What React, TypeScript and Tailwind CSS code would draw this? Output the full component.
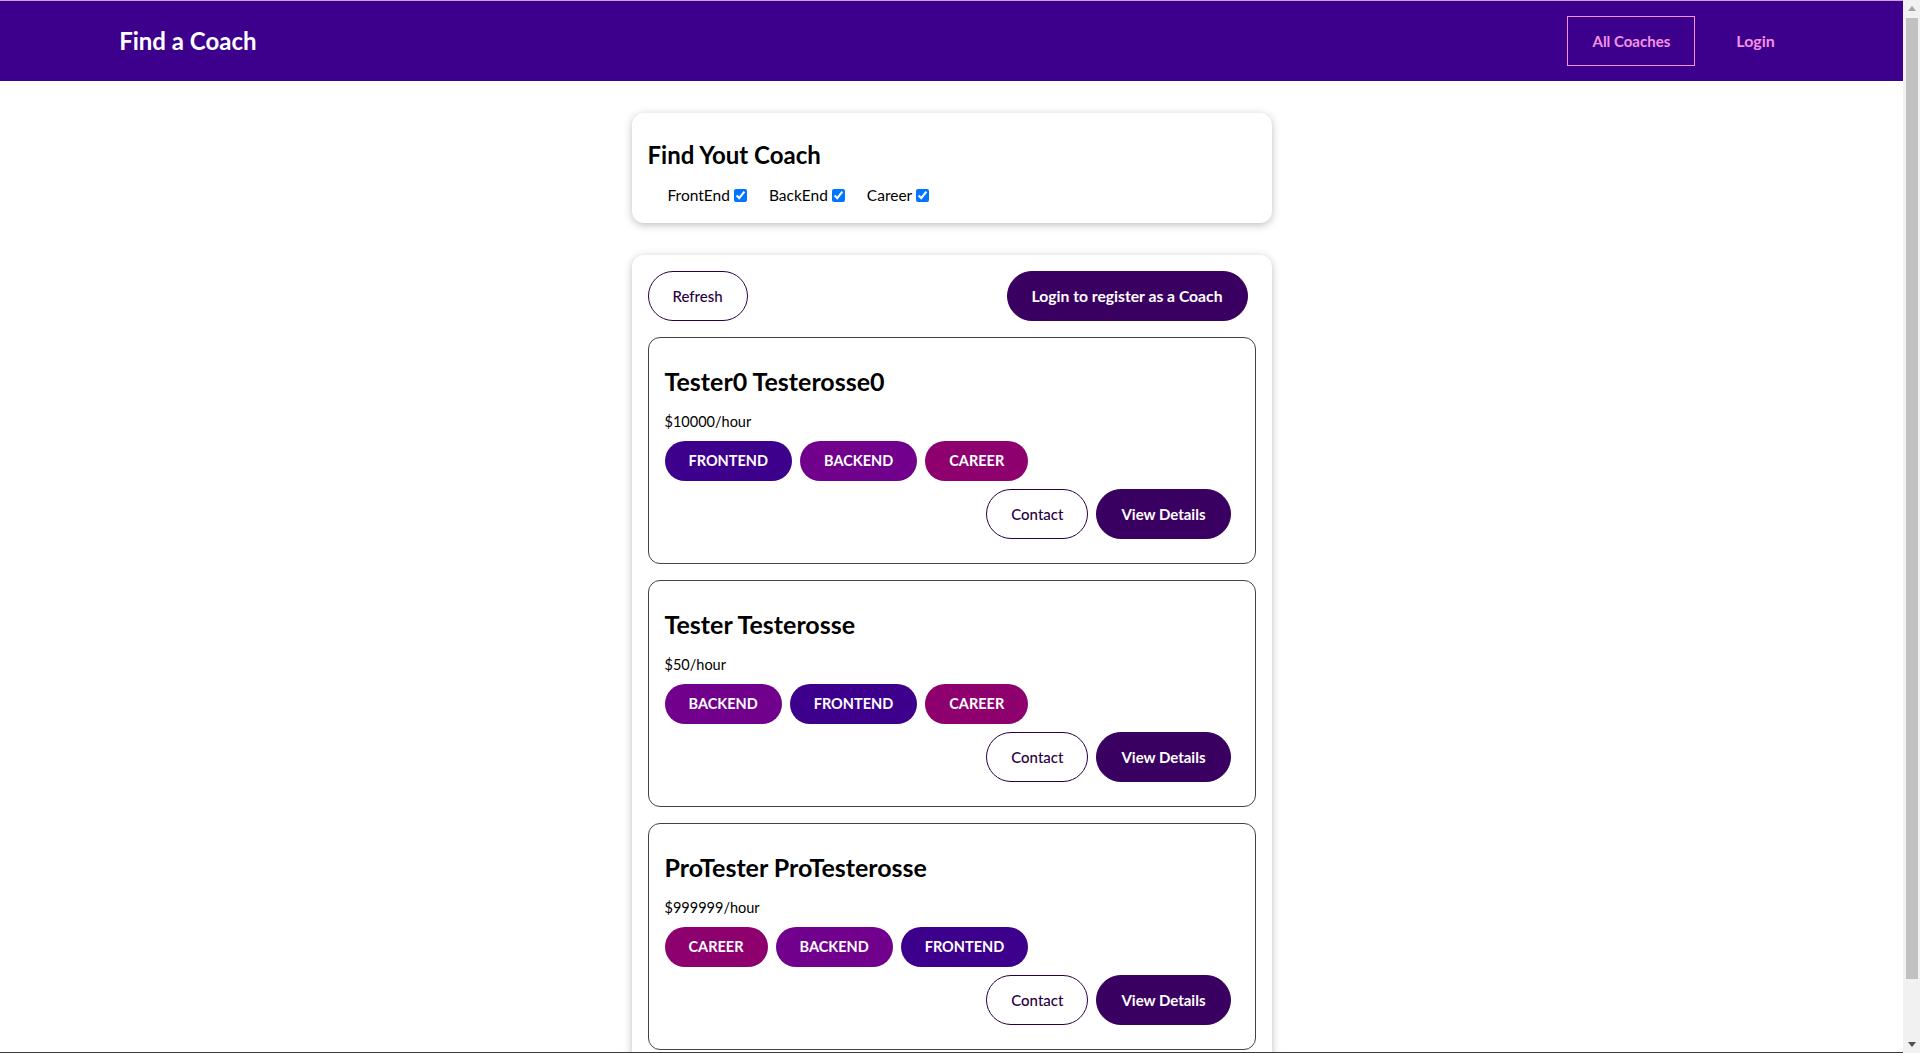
import { useState } from "react";

type Area = "frontend" | "backend" | "career";

interface Coach {
  id: string;
  firstName: string;
  lastName: string;
  rate: number;
  areas: Area[];
}

const coaches: Coach[] = [
  { id: "c0", firstName: "Tester0", lastName: "Testerosse0", rate: 10000, areas: ["frontend", "backend", "career"] },
  { id: "c1", firstName: "Tester", lastName: "Testerosse", rate: 50, areas: ["backend", "frontend", "career"] },
  { id: "c2", firstName: "ProTester", lastName: "ProTesterosse", rate: 999999, areas: ["career", "backend", "frontend"] },
];

const badgeColors: Record<Area, string> = {
  frontend: "bg-[#3d008d]",
  backend: "bg-[#71008d]",
  career: "bg-[#8d006e]",
};

const Badge = ({ type }: { type: Area }) => {
  return (
    <span className={`${badgeColors[type]} text-white rounded-[30px] px-6 py-2 leading-[24px] text-[14.5px] font-bold uppercase`}>
      {type}
    </span>
  );
};

const CoachItem = ({ coach }: { coach: Coach }) => {
  return (
    <li className="border border-[#424242] rounded-xl p-4">
      <h3 className="mt-[11px] text-[25px] leading-[32px] font-bold text-black">
        {coach.firstName} {coach.lastName}
      </h3>
      <h4 className="mt-[13px] text-[14.5px] leading-[24px] text-black">${coach.rate}/hour</h4>
      <div className="mt-[7px] flex gap-2">
        {coach.areas.map((area) => (
          <Badge key={area} type={area} />
        ))}
      </div>
      <div className="mt-2 mb-2 flex justify-end gap-2 pr-2">
        <button className="rounded-[30px] border border-[#270041] px-6 py-3 leading-[24px] text-[15px] font-medium text-[#270041]">
          Contact
        </button>
        <button className="rounded-[30px] border border-[#3a0061] bg-[#3a0061] px-6 py-3 leading-[24px] text-[15px] font-bold text-white">
          View Details
        </button>
      </div>
    </li>
  );
};

export default function App() {
  const [filters, setFilters] = useState({ frontend: true, backend: true, career: true });

  const toggle = (key: Area) => {
    setFilters({ ...filters, [key]: !filters[key] });
  };

  const visible = coaches.filter((c) => c.areas.some((a) => filters[a]));

  return (
    <div className="flex h-[1053px] w-full overflow-hidden bg-white font-['Lato',sans-serif]">
      <div className="flex flex-1 flex-col overflow-hidden">
        <div className="h-px bg-[#c9a2e2]" />
        <header className="flex h-20 w-full items-center bg-[#3d008d]">
          <nav className="mx-auto flex w-[90%] items-center justify-between">
            <h1>
              <a href="#" className="inline-block px-6 py-3 text-[24px] font-bold text-white">
                Find a Coach
              </a>
            </h1>
            <ul className="flex">
              <li className="mx-2">
                <a href="#" className="inline-block border border-[#f391e3] px-6 py-3 leading-[24px] text-[15px] font-bold text-[#f391e3]">
                  All Coaches
                </a>
              </li>
              <li className="mx-2">
                <a href="#" className="inline-block border border-transparent px-6 py-3 leading-[24px] text-[16px] font-bold text-[#f391e3]">
                  Login
                </a>
              </li>
            </ul>
          </nav>
        </header>

        <main className="flex-1 overflow-hidden">
          <section className="mx-auto mt-8 max-w-[40rem] rounded-xl bg-white p-4 shadow-[0_2px_8px_rgba(0,0,0,0.26)]">
            <h2 className="mt-[12px] text-[24px] leading-[28px] font-bold text-black">Find Yout Coach</h2>
            <div className="mt-[14px] flex items-center pl-[20px] text-[15.5px] leading-[24px] text-black">
              <span className="mr-[19px] flex items-center">
                <label htmlFor="frontend">FrontEnd</label>
                <input id="frontend" type="checkbox" checked={filters.frontend} onChange={() => toggle("frontend")} className="ml-[4px] mr-[3px] h-[13px] w-[13px]" />
              </span>
              <span className="mr-[19px] flex items-center">
                <label htmlFor="backend">BackEnd</label>
                <input id="backend" type="checkbox" checked={filters.backend} onChange={() => toggle("backend")} className="ml-[4px] mr-[3px] h-[13px] w-[13px]" />
              </span>
              <span className="flex items-center">
                <label htmlFor="career">Career</label>
                <input id="career" type="checkbox" checked={filters.career} onChange={() => toggle("career")} className="ml-[4px] mr-[3px] h-[13px] w-[13px]" />
              </span>
            </div>
          </section>

          <section className="mx-auto mt-8 max-w-[40rem] rounded-xl bg-white p-4 shadow-[0_2px_8px_rgba(0,0,0,0.26)]">
            <div className="flex justify-between">
              <button className="rounded-[30px] border border-[#270041] px-6 py-3 leading-[24px] text-[15px] font-medium text-[#270041]">
                Refresh
              </button>
              <button className="mr-2 rounded-[30px] border border-[#3a0061] bg-[#3a0061] px-6 py-3 leading-[24px] text-[15.7px] font-bold text-white">
                Login to register as a Coach
              </button>
            </div>
            <ul className="mt-4 flex flex-col gap-4">
              {visible.map((coach) => (
                <CoachItem key={coach.id} coach={coach} />
              ))}
            </ul>
          </section>
        </main>
        <div className="h-px bg-[#3a3a3a]" />
      </div>

      {/* fake browser scrollbar */}
      <aside className="flex w-[17px] flex-col items-center bg-[#f1f1f1]">
        <div className="flex h-[17px] w-full items-center justify-center">
          <svg width="8" height="5" viewBox="0 0 8 5">
            <path d="M0 5 L4 0 L8 5 Z" fill="#a3a3a3" />
          </svg>
        </div>
        <div className="mt-px h-[961px] w-[12px] bg-[#c1c1c1]" />
        <div className="flex-1" />
        <div className="flex h-[17px] w-full items-center justify-center">
          <svg width="8" height="5" viewBox="0 0 8 5">
            <path d="M0 0 L8 0 L4 5 Z" fill="#505050" />
          </svg>
        </div>
      </aside>
    </div>
  );
}
